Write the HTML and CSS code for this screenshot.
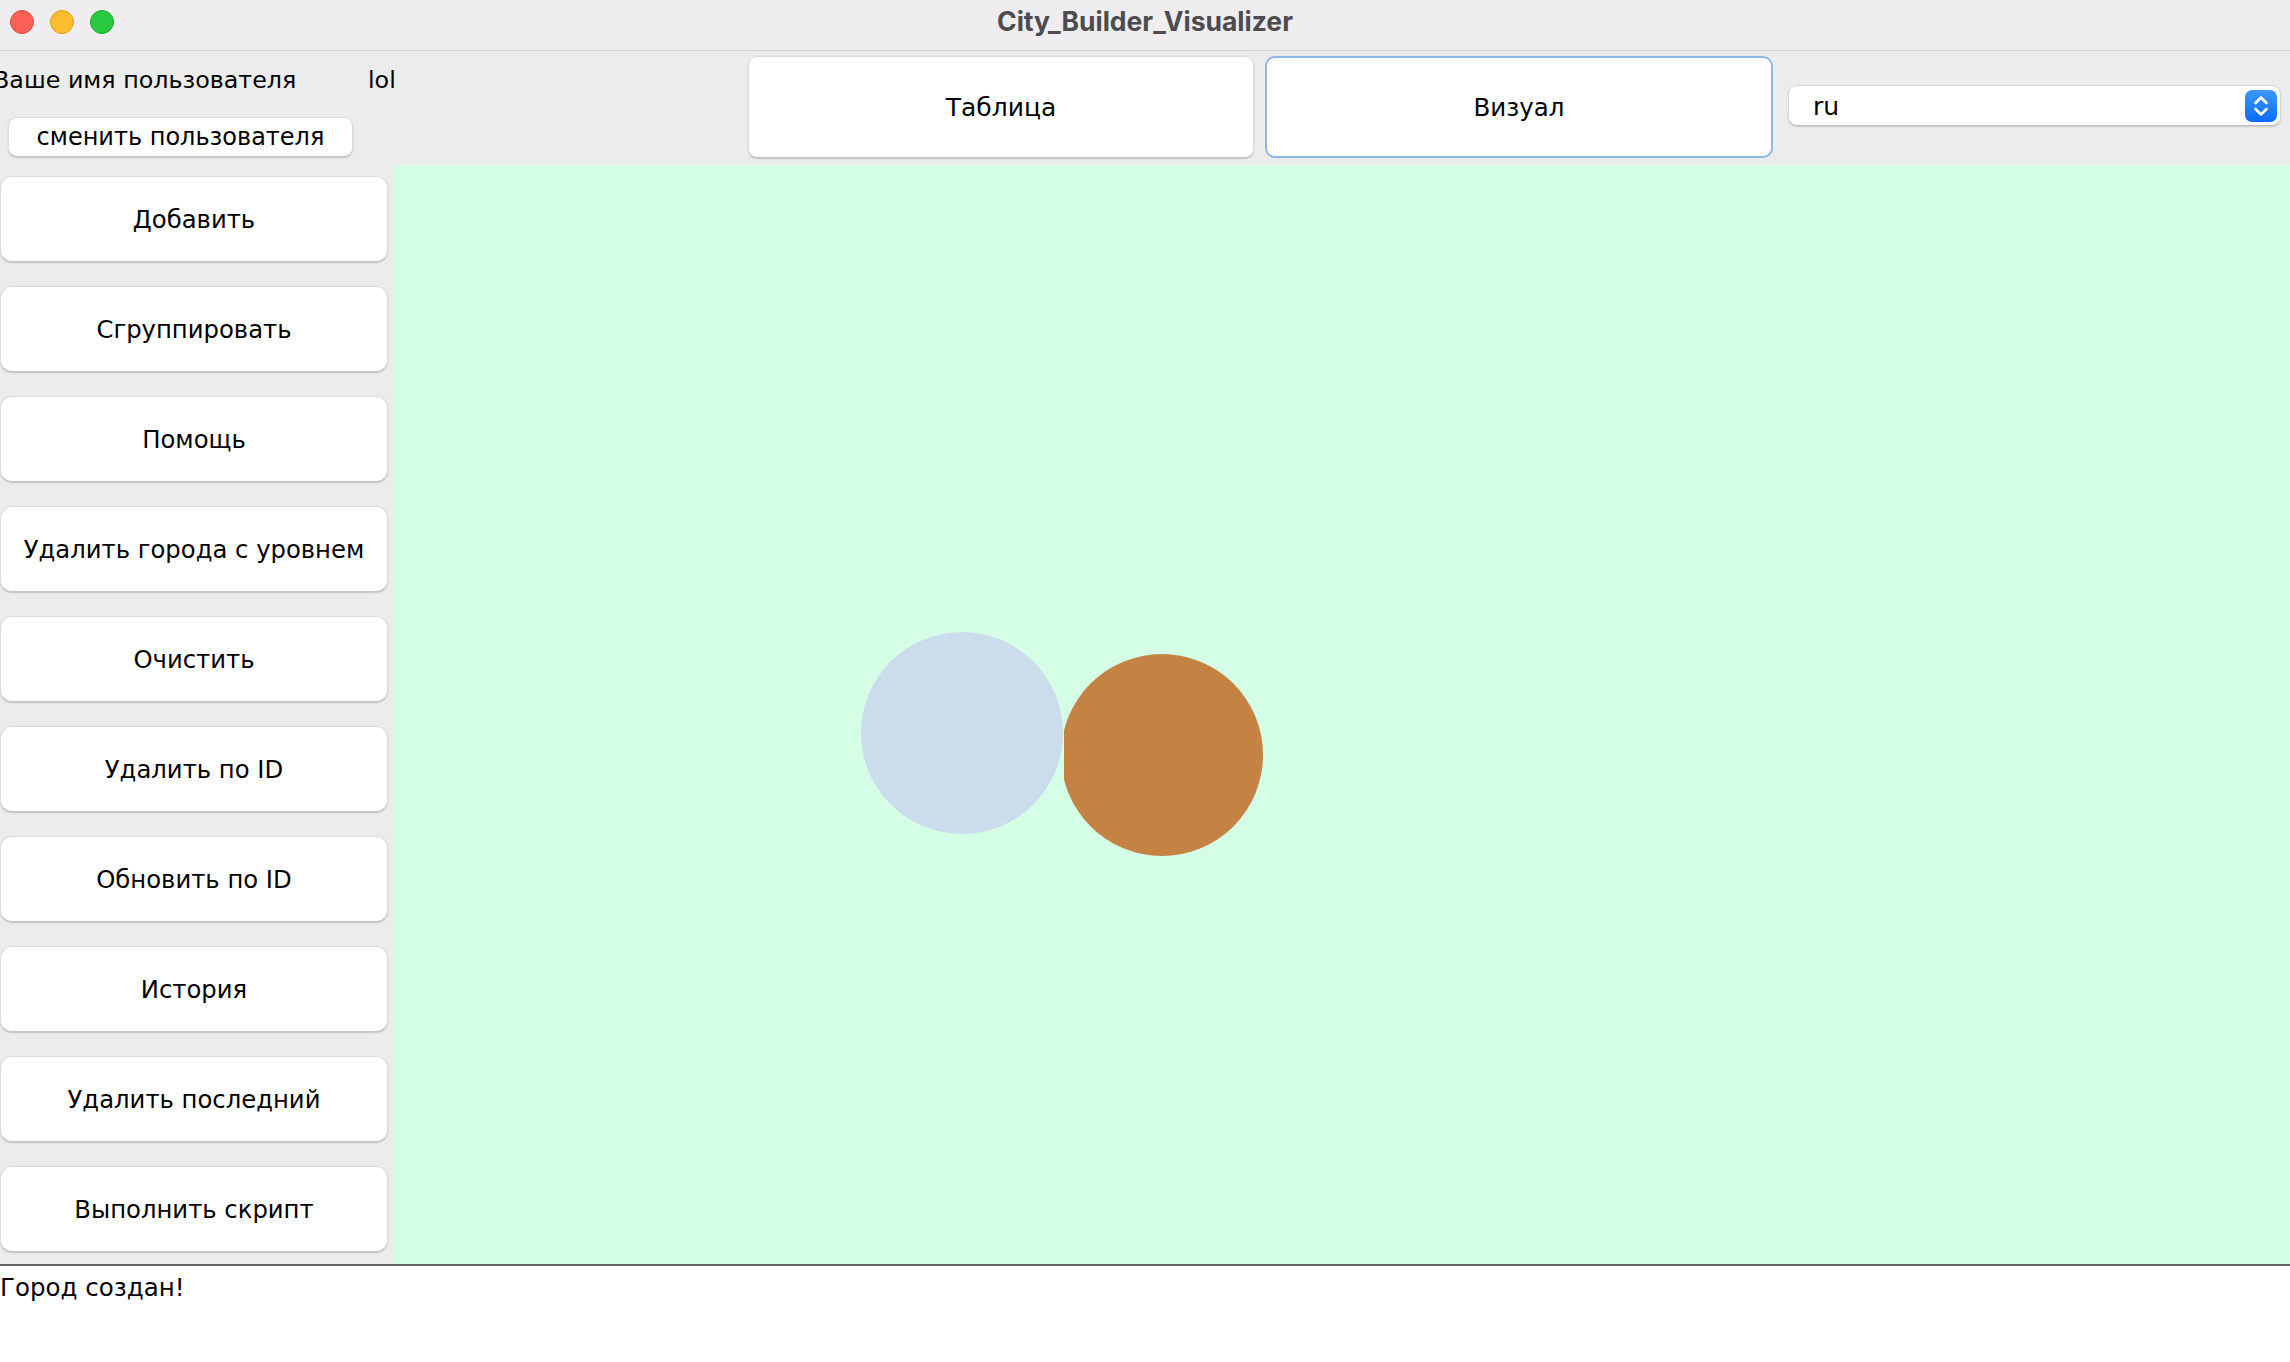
FILE: index.html
```html
<!DOCTYPE html>
<html lang="ru">
<head>
<meta charset="utf-8">
<title>City_Builder_Visualizer</title>
<link rel="stylesheet" href="styles.css">
</head>
<body>
<div class="window">
  <header class="titlebar">
    <div class="lights">
      <span class="light red"></span>
      <span class="light yellow"></span>
      <span class="light green"></span>
    </div>
    <div class="title">City_Builder_Visualizer</div>
  </header>

  <div class="topbar">
    <div class="user">
      <div class="user-row">
        <span class="user-label">Ваше имя пользователя</span>
        <span class="user-name">lol</span>
      </div>
      <button class="btn small">сменить пользователя</button>
    </div>
    <div class="tabs">
      <button class="btn tab">Таблица</button>
      <button class="btn tab active">Визуал</button>
    </div>
    <div class="select">
      <span class="select-value">ru</span>
      <span class="select-arrows">
        <svg width="32" height="32" viewBox="0 0 32 32">
          <path d="M10.5 13 L16 7.5 L21.5 13" fill="none" stroke="#fff" stroke-width="2.6" stroke-linecap="round" stroke-linejoin="round"/>
          <path d="M10.5 19 L16 24.5 L21.5 19" fill="none" stroke="#fff" stroke-width="2.6" stroke-linecap="round" stroke-linejoin="round"/>
        </svg>
      </span>
    </div>
  </div>

  <div class="middle">
    <nav class="sidebar">
      <button class="btn side">Добавить</button>
      <button class="btn side">Сгруппировать</button>
      <button class="btn side">Помощь</button>
      <button class="btn side">Удалить города с уровнем</button>
      <button class="btn side">Очистить</button>
      <button class="btn side">Удалить по ID</button>
      <button class="btn side">Обновить по ID</button>
      <button class="btn side">История</button>
      <button class="btn side">Удалить последний</button>
      <button class="btn side">Выполнить скрипт</button>
    </nav>
    <div class="canvas">
      <div class="city orange" style="left:668px; top:489px;"></div>
      <div class="city-box" style="left:468px; top:467px;">
        <div class="city blue"></div>
      </div>
    </div>
  </div>

  <div class="status">Город создан!</div>
</div>
</body>
</html>
```

FILE: styles.css
```css
* { box-sizing: border-box; }

html, body {
  margin: 0;
  padding: 0;
  width: 2290px;
  height: 1362px;
  overflow: hidden;
  background: #ffffff;
  font-family: "DejaVu Sans", "Liberation Sans", sans-serif;
  color: #000;
}

.window {
  display: flex;
  flex-direction: column;
  width: 2290px;
  height: 1362px;
}

.titlebar {
  position: relative;
  height: 51px;
  flex: none;
  background: #efedf0;
  border-bottom: 1px solid #d3d1d4;
  display: flex;
  align-items: center;
  justify-content: center;
}

.lights {
  position: absolute;
  left: 10px;
  top: 10px;
  display: flex;
  gap: 16px;
}

.light {
  width: 24px;
  height: 24px;
  border-radius: 50%;
  display: block;
}
.light.red { background: #fe5f57; border: 1px solid #e24b41; }
.light.yellow { background: #febc2e; border: 1px solid #e1a116; }
.light.green { background: #28c840; border: 1px solid #1aab29; }

.title {
  font-family: "Inter", "Liberation Sans", sans-serif;
  font-weight: 700;
  font-size: 26.5px;
  color: #4c4b4d;
  margin-top: -8px;
}

.topbar {
  height: 114px;
  flex: none;
  background: #ececec;
  display: flex;
  align-items: flex-start;
}

.user {
  width: 748px;
  flex: none;
  display: flex;
  flex-direction: column;
}

.user-row {
  display: flex;
  align-items: center;
  height: 36px;
  margin-top: 11px;
  font-size: 23.8px;
  margin-left: -7px;
}

.user-label { width: 375px; }

.btn {
  font-family: "DejaVu Sans", "Liberation Sans", sans-serif;
  background: #ffffff;
  border: 1px solid #dcdcdc;
  border-bottom-color: #c4c4c4;
  box-shadow: 0 1px 1.5px rgba(0,0,0,0.18);
  color: #000;
  padding: 0;
  display: flex;
  align-items: center;
  justify-content: center;
}

.btn.small {
  width: 345px;
  height: 40px;
  margin-left: 8px;
  margin-top: 19px;
  border-radius: 9px;
  font-size: 24px;
}

.tabs {
  display: flex;
  gap: 11px;
  margin-top: 5px;
}

.btn.tab {
  width: 506px;
  height: 102px;
  border-radius: 9px;
  font-size: 25px;
}

.btn.tab.active {
  width: 508px;
  border: 2px solid #8cb8ee;
  border-radius: 10px;
  box-shadow: none;
  font-size: 24.5px;
}

.select {
  margin-left: 15px;
  margin-top: 34px;
  width: 493px;
  height: 41px;
  background: #fff;
  border: 1px solid #d6d6d6;
  border-bottom-color: #c0c0c0;
  box-shadow: 0 1px 1.5px rgba(0,0,0,0.15);
  border-radius: 9px;
  display: flex;
  align-items: center;
  justify-content: space-between;
  padding: 0 3px 0 24px;
}

.select-value {
  font-size: 25px;
  margin-top: 2px;
}

.select-arrows {
  width: 32px;
  height: 32px;
  border-radius: 7px;
  background: linear-gradient(#3d97ff, #0a6bfd);
  display: flex;
}

.middle {
  height: 1101px;
  flex: none;
  display: flex;
  border-bottom: 2px solid #646464;
}

.sidebar {
  width: 393px;
  flex: none;
  background: #ececec;
  display: flex;
  flex-direction: column;
  gap: 24px;
  padding-top: 11px;
}

.btn.side {
  width: 388px;
  height: 86px;
  border-radius: 12px;
  font-size: 24.3px;
}

.canvas {
  position: relative;
  flex: 1;
  background: #d5fee7;
  overflow: hidden;
}

.city {
  position: absolute;
  width: 202px;
  height: 202px;
  border-radius: 50%;
}
.city.orange { background: #c48343; }

.city-box {
  position: absolute;
  width: 203px;
  height: 203px;
  background: #d5fee7;
}
.city-box .city.blue {
  left: 0;
  top: 0;
  background: #cbdced;
}

.status {
  flex: 1;
  background: #fff;
  font-size: 24.5px;
  padding-top: 7px;
  line-height: 1.2;
}
```
